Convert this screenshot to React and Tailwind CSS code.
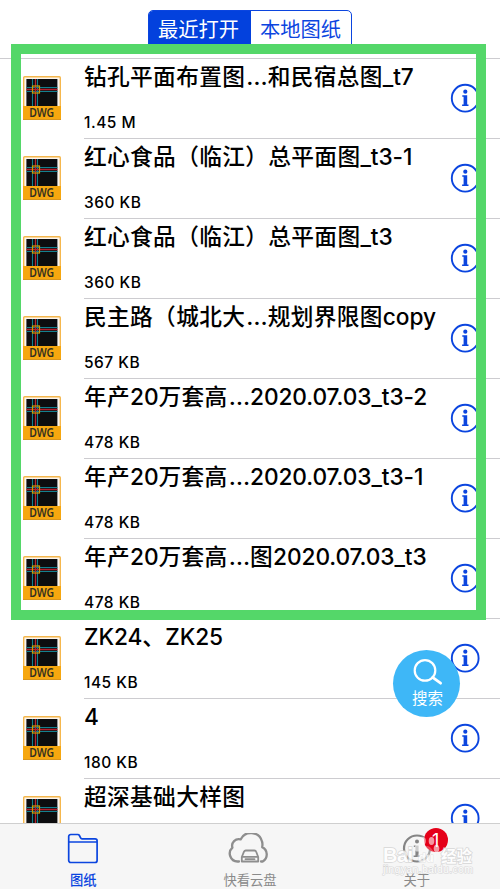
const files = [
  { name: '钻孔平面布置图…和民宿总图_t7', size: '1.45 M' },
  { name: '红心食品（临江）总平面图_t3-1', size: '360 KB' },
  { name: '红心食品（临江）总平面图_t3', size: '360 KB' },
  { name: '民主路（城北大…规划界限图copy', size: '567 KB' },
  { name: '年产20万套高…2020.07.03_t3-2', size: '478 KB' },
  { name: '年产20万套高…2020.07.03_t3-1', size: '478 KB' },
  { name: '年产20万套高…图2020.07.03_t3', size: '478 KB' },
  { name: 'ZK24、ZK25', size: '145 KB' },
  { name: '4', size: '180 KB' },
  { name: '超深基础大样图', size: '212 KB' },
];

const DwgIcon = () => (
  <svg className="h-11 w-[38px] shrink-0" viewBox="0 0 38 44">
    <rect x="0.7" y="0.7" width="36.6" height="42.6" rx="1" fill="#fbf5ee" stroke="#f5b74d" strokeWidth="1.4" />
    <rect x="3.4" y="3" width="31" height="28" fill="#0d0d0f" />
    <path d="M9.5 3v28M14.5 3v28M3.4 11.5h31M3.4 15.5h31" stroke="#13808f" strokeWidth="1.1" />
    <path d="M12.5 3v28M3.4 13.5h31" stroke="#b8202c" strokeWidth="1.3" />
    <rect x="9.5" y="10" width="7" height="7" fill="none" stroke="#c99a08" strokeWidth="1.2" />
    <rect x="0" y="30" width="38" height="14" fill="#f6a70f" />
    <path d="M0 43.5h38" stroke="#d9951c" strokeWidth="1" />
    <text x="18.7" y="41" textAnchor="middle" textLength="25" lengthAdjust="spacingAndGlyphs" fontFamily="Noto Sans, sans-serif" fontSize="12.2" fontWeight="600" fill="#33301f">
      DWG
    </text>
  </svg>
);

const InfoIcon = () => (
  <svg className="h-[30px] w-[30px] shrink-0" viewBox="0 0 30 30" fill="#0b45df">
    <circle cx="15.2" cy="15.2" r="13.4" fill="none" stroke="#0b45df" strokeWidth="1.9" />
    <circle cx="15.3" cy="8.7" r="2.1" />
    <path d="M12.3 12.2h4.9v9.4h1.3v1.5h-6.4v-1.5h1.5v-7.9h-1.3z" />
  </svg>
);

// latin and CJK runs carry different tracking
const FileName = ({ name }) => (
  <span className="mt-[1.5px] text-[22.7px] leading-[32px] font-medium whitespace-nowrap">
    {name.split(/(…|[\u3000-\uffef]+)/).map((part, i) => {
      if (part === '…') return <span key={i} className="ml-px text-[23.5px] leading-none">{part}</span>;
      return (
        <span key={i} className={i % 2 ? 'tracking-[0.35px]' : 'tracking-[-0.1px]'}>
          {part}
        </span>
      );
    })}
  </span>
);

const FileRow = ({ file }) => (
  <div className="flex h-20 shrink-0 pl-[23px]">
    <div className="flex w-[61px] shrink-0 pt-[17px]">
      <DwgIcon />
    </div>
    <div className="flex min-w-0 flex-1 border-b border-[#cdccd0]">
      <div className="flex min-w-0 flex-1 flex-col">
        <FileName name={file.name} />
        <span className="mt-[20.5px] text-[15.5px] leading-5 font-medium tracking-[0.5px]">{file.size}</span>
      </div>
      <div className="flex w-[50px] shrink-0 pt-[24px]">
        <InfoIcon />
      </div>
    </div>
  </div>
);

const FolderIcon = () => (
  <svg className="h-8 w-8" viewBox="0 0 32 32" fill="none" stroke="#0b45df" strokeWidth="1.7" strokeLinejoin="round">
    <path d="M1.7 9V3.5a2 2 0 0 1 2-2h7q1.2 0 1.7 1l1.2 2.4q.4.9 1.4.9h13.1a2 2 0 0 1 2 2v19.7a2 2 0 0 1-2 2H3.7a2 2 0 0 1-2-2zM1.7 9h28.4" />
  </svg>
);

const CloudIcon = () => (
  <svg className="h-8 w-11" viewBox="0 0 44 32" fill="none" stroke="#8e8e8e" strokeWidth="2.3" strokeLinejoin="round" strokeLinecap="round">
    <path d="M11 28.5H9.5A8 8 0 0 1 4.4 14.6a6.6 6.6 0 0 1 8.2-8.2A11.5 11.5 0 0 1 34 8.5q.8 2.2.2 5.6a8.2 8.2 0 0 1 .5 14.4H33" />
    <path d="M17.8 17.5h8.6q1.4 0 1.8 1.2l2 5.3v4.5H13.8V24l2.2-5.3q.5-1.2 1.8-1.2zM14 23.8h16M17.5 26.2h9" strokeWidth="1.8" />
  </svg>
);

const AboutIcon = () => (
  <svg className="h-8 w-8" viewBox="0 0 32 32" fill="#858585">
    <circle cx="16" cy="15.5" r="13" fill="none" stroke="#858585" strokeWidth="2.2" />
    <circle cx="16" cy="8.5" r="2" />
    <path d="M12.8 12.5h4.8v10h1.5V24h-6.5v-1.5h1.8v-8.4h-1.6z" />
  </svg>
);

const tabs = [
  { label: '图纸', Icon: FolderIcon, active: true },
  { label: '快看云盘', Icon: CloudIcon },
  { label: '关于', Icon: AboutIcon, badge: 1 },
];

const Watermark = () => (
  <svg className="absolute right-0 bottom-0 h-[66px] w-[125px] opacity-80" viewBox="0 -12 125 66" fill="#ffffff" stroke="#cfcfcf" strokeWidth="0.7" paintOrder="stroke">
    <text x="8" y="27" fontFamily="Liberation Sans, sans-serif" fontSize="20" fontWeight="700" textLength="30" strokeWidth="1.4">
      Bai
    </text>
    <text x="51" y="26.5" fontFamily="Liberation Sans, sans-serif" fontSize="12.5" fontWeight="700" textAnchor="middle" strokeWidth="1.2">
      du
    </text>
    <text x="66" y="27" fontFamily="Noto Sans CJK SC, sans-serif" fontSize="15.5" fontWeight="700" strokeWidth="1.4">
      经验
    </text>
    <text x="8" y="38" fontFamily="Liberation Sans, sans-serif" fontSize="10.5" textLength="90" strokeWidth="1.1">
      jingyan.baidu.com
    </text>
    <g strokeWidth="0" opacity="0.75">
      <ellipse cx="48" cy="6" rx="2.8" ry="4" />
      <ellipse cx="56.5" cy="6" rx="2.8" ry="4" />
      <ellipse cx="42.5" cy="13" rx="2.8" ry="3.6" />
      <ellipse cx="61.5" cy="13.5" rx="2.8" ry="3.8" />
      <path d="M52 11c4 0 5 4 8 7 4 4 1 10-3 10h-10c-4 0-7-6-3-10 3-3 4-7 8-7z" opacity="0.45" />
    </g>
  </svg>
);

const TabBar = () => (
  <nav className="relative z-20 flex h-[66px] shrink-0 border-t border-[#cfcfcf] bg-[#f6f6f6]">
    {tabs.map(({ label, Icon, active, badge }) => (
      <div key={label} className="flex flex-1 flex-col items-center pt-[9px]">
        <div className="relative">
          <Icon />
          {badge ? (
            <span className="absolute -top-[5px] left-[23px] flex h-6 w-6 items-center justify-center rounded-full bg-[#e50019] text-[18px] text-white">
              {badge}
            </span>
          ) : null}
        </div>
        <span className={active ? 'mt-[5px] text-[13.3px] leading-5 font-medium text-[#0b45df]' : 'mt-[5px] text-[13.3px] leading-5 text-[#8a8a8a]'}>
          {label}
        </span>
      </div>
    ))}
    <Watermark />
  </nav>
);

const App = () => (
  <div className="relative flex h-[889px] w-[500px] flex-col overflow-hidden bg-white font-['Inter','Noto_Sans_CJK_SC',sans-serif] text-black">
    <header className="flex h-[59px] shrink-0 justify-center border-b border-[#cdccd0] pt-[10px]">
      <div className="flex h-[39px] w-[204px] overflow-hidden rounded-[5px] border border-[#0b45df] text-[20.3px] leading-[38px]">
        <button type="button" className="w-[102px] bg-[#0341dd] pr-[3px] text-white">最近打开</button>
        <button type="button" className="flex-1 pr-[1px] text-[#0b45df]">本地图纸</button>
      </div>
    </header>

    <main className="min-h-0 flex-1 overflow-hidden">
      {files.map((file, i) => (
        <FileRow key={i} file={file} />
      ))}
    </main>

    <TabBar />

    <div className="pointer-events-none absolute top-11 left-[11px] z-10 h-[576px] w-[475px] border-10 border-[#54d769]" />

    <button type="button" className="absolute top-[650px] left-[393px] z-10 flex h-[67px] w-[67px] flex-col items-center rounded-full bg-[#3eb7f7] pt-[9px] text-white">
      <svg className="ml-[3px] h-[28px] w-[30px]" viewBox="0 0 30 28" fill="none" stroke="#fff" strokeWidth="2.2" strokeLinecap="round">
        <circle cx="12" cy="11.4" r="10.3" />
        <path d="M19.6 18.4l8 5.8" strokeWidth="2.8" />
      </svg>
      <span className="pl-[2px] text-[15.5px] leading-[24px]">搜索</span>
    </button>
  </div>
);

export default App;
